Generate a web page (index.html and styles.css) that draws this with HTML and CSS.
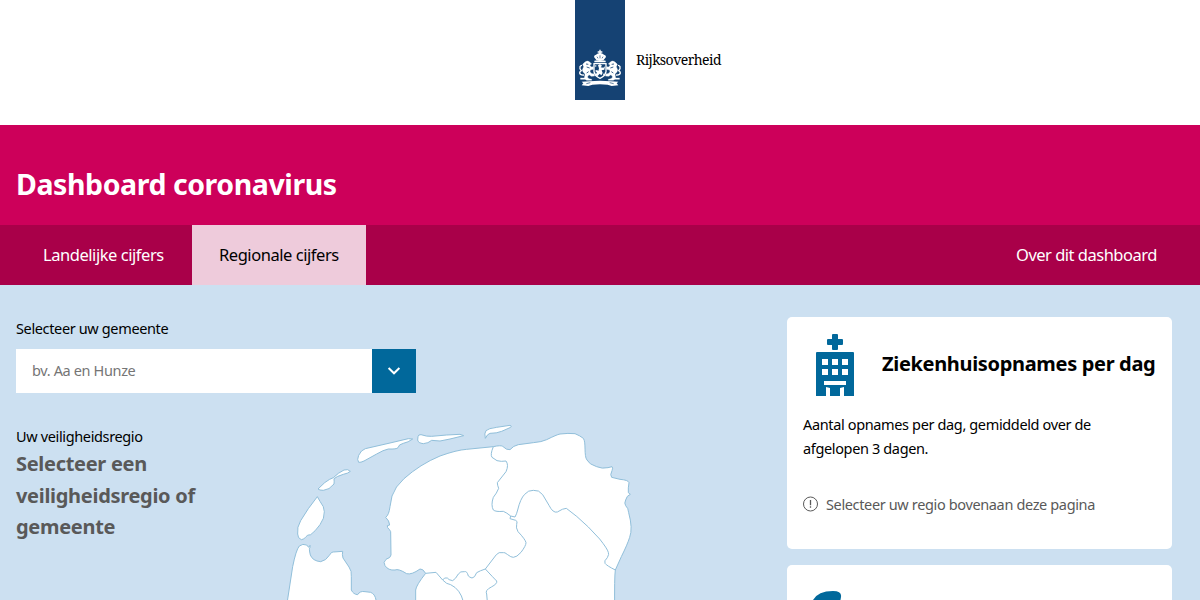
FILE: index.html
```html
<!DOCTYPE html>
<html lang="nl">
<head>
<meta charset="utf-8">
<title>Dashboard coronavirus</title>
<link rel="stylesheet" href="styles.css">
</head>
<body>
<header class="brand">
  <div class="brand-ribbon">
    <svg class="brand-arms" viewBox="0 0 150 135" fill="#fff" stroke="#fff">
      <path d="M73 14h4v5h5v4h-5v4h-4v-4h-5v-4h5z" stroke="none"/>
      <path d="M57 36q0-6 6-7 5-5 12-5t12 5q6 1 6 7l-7 9H64z" stroke="none"/>
      <path d="M66 35l3 5M75 31v9M84 35l-3 5" stroke="#154273" stroke-width="2"/>
      <path d="M58 47q17-4 34 0v5H58z" stroke="none"/>
      <path d="M57 56h36v24q-2 13-18 20-16-7-18-20z" fill="none" stroke-width="4"/>
      <path d="M69 61l6-4 6 5-4 5 8 1 5-4-2 10-8 2 3 8-4 7-5-5-6 7-7-2 5-8-6-6 6-2 4 3 2-8z" stroke="none"/>
      <path d="M60 60l5 2-3 5zM61 82l4 5-2 4zM88 82l-4 8 3 1z" stroke="none"/>
      <g id="lion">
        <path d="M30 51q7-5 13-1l7 7-6 3 5 6 6-1v8l-9 2-1 6 6 5 5 0 3 7-10 1-7-5-5 7 5 5 8 2v3H35l-7-6 2-13q-7-4-8-12l4-10-3-7z" stroke-width="1"/>
        <path d="M27 90q-12 1-13-6 0-5 5-7-6-6-4-12 2-4 6-4" fill="none" stroke-width="4"/>
        <path d="M16 101h22" fill="none" stroke-width="5"/>
        <path d="M35 66l9 3M35 84l6-4M33 57l7 1" stroke="#154273" stroke-width="2.5"/>
      </g>
      <use href="#lion" transform="translate(150 0) scale(-1 1)"/>
      <path d="M20 110l23-1q32-4 64 0l23 1-5 5 5 6-20 2-12-4q-23-3-46 0l-12 4-20-2 5-6z" stroke="none"/>
      <path d="M34 116l12-3M116 116l-12-3" stroke="#154273" stroke-width="2" fill="none"/>
    </svg>
  </div>
  <span class="brand-name">Rijksoverheid</span>
</header>
<div class="banner"><h1 class="banner-title">Dashboard coronavirus</h1></div>
<nav class="nav">
  <a class="nav-item nav-first"><span>Landelijke cijfers</span></a>
  <a class="nav-item nav-active"><span>Regionale cijfers</span></a>
  <a class="nav-item nav-last"><span>Over dit dashboard</span></a>
</nav>
<main class="content">
  <section class="region">
    <label class="label">Selecteer uw gemeente</label>
    <div class="select">
      <span class="select-input">bv. Aa en Hunze</span>
      <span class="select-button"><svg width="14" height="10" viewBox="0 0 14 10"><path d="M1.6 2l5.4 5.3L12.4 2" fill="none" stroke="#fff" stroke-width="2"/></svg></span>
    </div>
    <div class="region-row">
      <div class="region-info">
        <p class="region-label">Uw veiligheidsregio</p>
        <h2 class="region-title">Selecteer een<br>veiligheidsregio of<br>gemeente</h2>
      </div>
      <svg class="map" viewBox="0 0 1080 570">
        <g class="land">
          <path d="M112 260L120 274Q133 290 133 305Q134 325 120 344Q105 365 92 374Q82 374 78 380Q72 389 64 389Q53 385 53 372Q50 352 62 332L85 296Z"/>
          <path d="M114 237L134 218Q150 206 160 203Q175 188 192 180Q204 176 211 184Q205 190 190 193Q170 199 162 206Q163 217 162 222Q148 240 130 241Q118 241 114 237Z"/>
          <path d="M236 157Q230 150 236 136Q243 120 256 116L330 99L385 86L398 87Q385 97 370 100Q356 103 354 113Q350 118 325 117Q310 120 290 132L252 153Q242 158 236 157Z"/>
          <path d="M414 80Q415 73 423 74Q440 80 455 79L500 75L540 73L551 77L510 87L480 93L455 91Q445 100 430 101Q414 99 413 90Z"/>
          <path d="M616 85Q612 70 618 62Q625 55 650 52L690 46Q697 48 692 52L665 64Q650 70 630 70Q622 72 616 85Z"/>
          <path d="M18 600L38 470Q48 420 58 408Q68 400 80 405L86 412L90 406V412Q86 415 91 435Q98 453 122 455Q138 452 148 436Q155 424 160 426L188 424Q186 434 189 444L207 471Q216 483 214 500V540Q220 553 233 554Q240 542 255 545L272 547Q285 552 288 570V600Z"/>
          <path d="M407 600V540Q409 525 437 490Q428 475 420 477Q395 495 380 491Q355 475 345 480Q325 482 315 467Q308 457 318 448Q333 443 333 435L332 365Q330 360 323 353L322 347L329 345Q328 332 317 322Q327 315 330 290L336 258Q345 230 372 206Q420 163 480 138Q530 120 560 118L640 110Q662 105 668 109Q680 121 690 119Q700 107 715 104L760 98Q785 96 800 89Q830 74 840 72Q865 69 885 71Q900 77 910 85C919 97 911 138 921 150Q927 163 950 170Q966 177 984 173L996 170Q1000 173 996 182Q989 195 995 202L1020 208Q1045 210 1047 218Q1044 234 1045 248L1051 253Q1040 257 1037 270Q1032 280 1037 287Q1045 294 1046 308Q1059 355 1049 382Q1042 404 1024 440L1006 480Q1003 500 1004 600Z"/>
        </g>
        <g class="borders">
          <path d="M640 110Q630 134 636 142Q652 156 664 154L678 153Q687 165 678 185L652 218Q652 225 656 235Q650 250 640 262Q632 285 640 300Q647 306 670 304Q680 308 692 318L705 321Q710 312 713 300Q721 266 734 253Q745 240 760 241Q777 239 788 254L807 286Q819 310 832 306Q849 295 859 295Q889 316 925 351L959 387Q982 416 985 427Q988 432 982 443Q971 453 975 460Q980 467 1006 480"/>
          <path d="M692 318L690 326L707 331Q714 333 710 343Q707 353 714 365Q736 388 738 398Q738 407 723 427Q710 442 700 442Q693 442 683 434Q673 426 671 428Q655 425 649 434L616 477Q600 482 590 488Q584 504 576 504Q569 502 565 498Q561 482 553 485Q541 483 535 492Q527 507 518 512Q505 510 502 504Q493 501 488 510"/>
          <path d="M437 490L468 487L488 510Q500 523 512 524Q541 538 550 575M616 477Q640 503 650 513Q653 521 634 531Q614 541 620 552L622 575"/>
        </g>
      </svg>
    </div>
  </section>
  <aside class="cards">
    <article class="card">
      <div class="card-head">
        <svg class="hospital" viewBox="0 0 38 62" fill="#01689b">
          <path d="M17 0h4q1 0 1 1v4h4q1 0 1 1v4q0 1-1 1h-4v4q0 1-1 1h-4q-1 0-1-1v-4h-4q-1 0-1-1V6q0-1 1-1h4V1q0-1 1-1z"/>
          <path fill-rule="evenodd" d="M1 18h36q1 0 1 1v43H28v-9l-4 1v8H14v-8l-4-1v9H0V19q0-1 1-1zM6 25v6h6v-6zm10 0v6h6v-6zm10 0v6h6v-6zM6 35v6h6v-6zm10 0v6h6v-6zm10 0v6h6v-6zM8 47v4h22v-4z"/>
        </svg>
        <h3 class="card-title">Ziekenhuisopnames per dag</h3>
      </div>
      <p class="card-text">Aantal opnames per dag, gemiddeld over de<br>afgelopen 3 dagen.</p>
      <p class="notice">
        <svg class="notice-icon" width="16" height="16" viewBox="0 0 16 16" fill="none" stroke="#595959"><circle cx="7.5" cy="8" r="7"/><path d="M7.5 4v5.2M7.5 10.3v1.4" stroke-width="1.3"/></svg>
        <span>Selecteer uw regio bovenaan deze pagina</span>
      </p>
    </article>
    <article class="card card-next">
      <svg width="30" height="20" viewBox="0 0 30 20" fill="#01689b"><path d="M0 9Q5 0 20 0q9 0 8 6-1 7-4 14H0z"/></svg>
    </article>
  </aside>
</main>
</body>
</html>
```
FILE: styles.css
```css
* { box-sizing: border-box; }
body { margin: 0; height: 600px; overflow: hidden; background: #fff; color: #000; font-family: "Noto Sans", "Open Sans", sans-serif; font-size: 14.5px; letter-spacing: -0.36px; }
h1, h2, h3, p { margin: 0; }
svg { display: block; flex: none; }
.brand { height: 125px; padding-left: 575px; display: flex; }
.brand-ribbon { width: 50px; height: 100px; background: #154273; padding-top: 45px; }
.brand-arms { width: 50px; height: 45px; }
.brand-name { margin: 50px 0 0 11px; font: 14px/20px "Noto Serif", "Liberation Serif", serif; letter-spacing: -0.55px; }
.banner { height: 100px; padding: 39px 16px 0; background: #cd005a; color: #fff; }
.banner-title { font-size: 28.5px; line-height: 40px; font-weight: 700; letter-spacing: -0.43px; white-space: nowrap; }
.nav { height: 60px; display: flex; background: #a90049; color: #fff; font-size: 16.5px; line-height: 60px; letter-spacing: -0.45px; white-space: nowrap; }
.nav-first { width: 192px; padding-left: 43px; }
.nav-active { width: 174px; padding-left: 27px; background: #eecbdb; color: #000; }
.nav-last { margin-left: auto; width: 184px; letter-spacing: -0.5px; }
.content { height: 315px; background: #cce0f1; display: flex; overflow: hidden; }
.region { width: 787px; padding: 31px 0 0 16px; }
.label { display: block; height: 33px; line-height: 24px; }
.select { width: 400px; height: 44px; display: flex; background: #fff; }
.select-input { flex: 1; padding-left: 16px; line-height: 42px; color: #757575; }
.select-button { width: 44px; background: #01689b; display: flex; align-items: center; justify-content: center; }
.region-row { display: flex; padding-top: 17px; }
.region-info { width: 264px; padding-top: 14px; }
.region-label { line-height: 24px; }
.region-title { font-size: 20px; line-height: 31.5px; font-weight: 700; letter-spacing: -0.3px; color: #595959; white-space: nowrap; }
.map { width: 360px; height: 190px; }
.land { fill: #fff; stroke: #91bfda; stroke-width: 3; stroke-linejoin: round; }
.borders { fill: none; stroke: #91bfda; stroke-width: 3; stroke-linejoin: round; }
.cards { width: 385px; padding-top: 32px; display: flex; flex-direction: column; gap: 16px; }
.card { flex: none; height: 232px; border-radius: 5px; background: #fff; padding: 17px 16px; }
.card-head { height: 78px; display: flex; padding-left: 13px; }
.hospital { width: 38px; height: 62px; }
.card-title { margin: 14px 0 0 28px; font-size: 20px; line-height: 32px; font-weight: 700; letter-spacing: -0.33px; white-space: nowrap; }
.card-text { line-height: 24px; white-space: nowrap; }
.notice { margin-top: 32px; display: flex; align-items: center; gap: 7px; line-height: 24px; color: #595959; white-space: nowrap; }
.card-next { padding: 26px 26px; }
```
